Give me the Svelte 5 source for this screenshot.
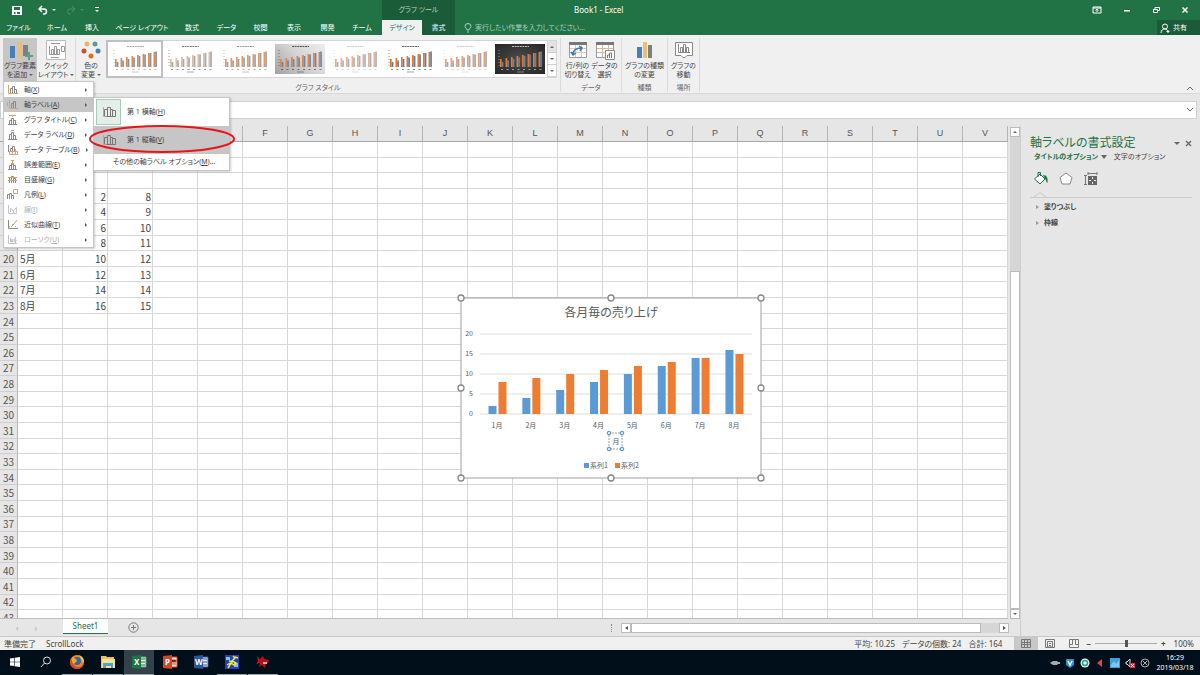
<script>
    const tabs = ["ファイル", "ホーム", "挿入", "ページ レイアウト", "数式", "データ", "校閲", "表示", "開発", "チーム"];

    const series1 = [2, 4, 6, 8, 10, 12, 14, 16];
    const series2 = [8, 9, 10, 11, 12, 13, 14, 15];
    const columns = "ABCDEFGHIJKLMNOPQRSTUV".split("");
    const firstDataRow = 16;

    const rows = Array.from({ length: 31 }, (_, i) => {
        const n = i + 13;
        const m = n - firstDataRow;
        const hasData = m >= 0 && m < series1.length;
        return { n, cells: hasData ? [`${m + 1}月`, series1[m], series2[m]] : [] };
    });

    const styles = [
        { a: "#e58a4a", b: "#8193a8", text: "#aaa", selected: true },
        { a: "#e0bda5", b: "#aaa", text: "#777" },
        { a: "#e79a62", b: "#9aa3ae", text: "#999" },
        { fill: "gray", a: "#d9874f", b: "#71879f", text: "#555" },
        { a: "#eeb08a", b: "#a3b4c8", text: "#ccc" },
        { a: "#e8772e", b: "#5e7fa3", text: "#666" },
        { a: "#e9a273", b: "#a2aab5", text: "#ccc" },
        { fill: "dark", a: "#e8772e", b: "#6e8299", text: "#bbb" },
    ];

    // g = gray strokes, o = orange strokes
    const menu = [
        { label: "軸", key: "X", g: "M3.5 9V4.500h2V9M5.500 9V2.500h2V9M7.500 9V5.500h2V9", o: "M1.500 1v8.500H11" },
        { label: "軸ラベル", key: "A", g: "M4.500 9V4.500h2V9M6.500 9V2.500h2V9", o: "M.5 3v4M2.500 1v8.500H11", open: true },
        { label: "グラフ タイトル", key: "C", g: "M2.500 10V6.500h2V10M4.500 10V4.500h2V10M6.500 10V6.500h2V10M1 10.500h9", o: "M2 1.500h7M5.500 1v2" },
        { label: "データ ラベル", key: "D", g: "M2.500 10V5.500h2V10M4.500 10V3.500h2V10M6.500 10V6.500h2V10M1 10.500h9", o: "M4 1.500h3" },
        { label: "データ テーブル", key: "B", g: "M1.500 1v7M3.500 7V4.500h2V7M5.500 7V2.500h2V7", o: "M2.500 7.500h8v3h-8zM5.500 8v2M8.500 5v5" },
        { label: "誤差範囲", key: "E", g: "M2.500 10V6.500h2V10M4.500 10V4.500h2V10M6.500 10V6.500h2V10M1 10.500h9", o: "M4 1.500h3M5.500 2v4" },
        { label: "目盛線", key: "G", g: "M2.500 9V3.500h2V9M4.500 9V2.500h2V9M6.500 9V4.500h2V9", o: "M1 3.500h9M1 6.500h9" },
        { label: "凡例", key: "L", g: "M.5 10V5.500h2V10M2.500 10V4.500h2V10M4.500 10V6.500h2V10", o: "M6.500.5h4v4h-4z" },
        { label: "線", key: "I", g: "M1.500 1v8.500H10M3.500 8V4.500l3 2 3-3v5M6.500 6v3", o: "", off: true },
        { label: "近似曲線", key: "T", g: "M1.500 1v8.500H11", o: "M2 7.500h1M4 8l3-3 3-4M5 5.500h1M8 7.500h1" },
        { label: "ローソク", key: "U", g: "M1.500 1v8.500H10M3.500 4v4M4.500 5.500h1V8h-1zM8.500 3v6M7 5.500h2v2H7z", o: "", off: true },
    ];

    const handles = [[0, 0], [150, 0], [300, 0], [0, 90], [300, 90], [0, 180], [150, 180], [300, 180]];
</script>

{#snippet axisIcon()}
    <svg class="axisIcon" viewBox="0 0 16 16" fill="none">
        <path d="M2.500 3v9.500H6" stroke="#d8a070" />
        <path d="M3.500 12V5.500h3V12M6.500 12V3.500h3V12M9.500 12V5.500h2V12M11.500 6.500h3V12.500h-9" stroke="#777" />
    </svg>
{/snippet}

<main>
    <header>
        <div class="titlebar">
            <div class="quick">
                <button aria-label="保存"><svg width="10" height="10" viewBox="0 0 10 10"><path d="M0 1h10v9H0zM2 2v3h6V2zM2 7v2h1.500V7zM5 7v2h3V7z" fill="#fff" fill-rule="evenodd" /></svg></button>
                <button aria-label="元に戻す"><svg width="18" height="10" viewBox="0 0 18 10" fill="none" stroke="#fff"><path d="M4 1L1 4l3 3M1 4h5a2.500 2.500 0 0 1 0 5H5" stroke-width="1.500" /><path d="M14 4h4l-2 2z" fill="#fff" stroke="none" /></svg></button>
                <button aria-label="やり直し"><svg width="18" height="10" viewBox="0 0 18 10" fill="none" stroke="#4c8f6b"><path d="M6 1l3 3-3 3M9 4H4a2.500 2.500 0 0 0 0 5h1" /><path d="M14 4h4l-2 2z" fill="#4c8f6b" stroke="none" /></svg></button>
                <button aria-label="カスタマイズ"><svg width="6" height="10" viewBox="0 0 6 10" fill="#fff"><path d="M1 2h4v1H1zM1 5h4L3 7z" /></svg></button>
            </div>
            <div class="context">グラフ ツール</div>
            <h1>Book1 - Excel</h1>
            <div class="window">
                <button aria-label="リボンの表示オプション"><svg width="10" height="8" viewBox="0 0 10 8" fill="none" stroke="#fff"><path d="M1 1h8v6H1zM1 2h8M5 6V3M3.500 4.500L5 3l1.500 1.500" /></svg></button>
                <button aria-label="最小化"><svg width="8" height="8" viewBox="0 0 8 8"><path d="M1 4h6v1.500H1z" fill="#fff" /></svg></button>
                <button aria-label="元のサイズに戻す"><svg width="8" height="8" viewBox="0 0 8 8" fill="none" stroke="#fff"><path d="M1.500 3.500h4v3h-4zM3 3V1.500h4.500v3H6" /></svg></button>
                <button aria-label="閉じる"><svg width="8" height="8" viewBox="0 0 8 8" stroke="#fff" stroke-width="1.500"><path d="M1.500 1.500l5 5M6.500 1.500l-5 5" /></svg></button>
            </div>
        </div>
        <nav>
            <div class="tabs">
                {#each tabs as tab}
                    <button>{tab}</button>
                {/each}
            </div>
            <div class="contextTabs">
                <button class="active">デザイン</button>
                <button>書式</button>
            </div>
            <label class="tell">
                <svg width="8" height="10" viewBox="0 0 8 10" fill="none" stroke="#b5d2c2"><path d="M3 7C3 5 1 5 1 3.500a3 3 0 0 1 6 0C7 5 5 5 5 7zM3 9h2" /></svg>
                <input placeholder="実行したい作業を入力してください..." aria-label="操作アシスト" />
            </label>
            <button class="share">
                <svg width="10" height="10" viewBox="0 0 10 10" fill="none" stroke="#fff"><circle cx="5" cy="3.500" r="2.500" /><path d="M1 10c0-3 2-4 4-4s2 1 3 2M8 7v3M6.500 8.500h3" /></svg>
                共有
            </button>
        </nav>
    </header>

    <section class="ribbon">
        <div class="addWrap">
            <button class="tool pressed">
                <svg width="28" height="20" viewBox="0 0 28 20"><path d="M4 6h5v12H4z" fill="#4a7ebb" /><path d="M11 2h5v16h-5z" fill="#e9bf76" /><path d="M17 5h5v11h-5z" fill="#7f7f7f" /><path d="M22 12h2v3h3v2h-3v3h-2v-3h-3v-2h3z" fill="#5f9f83" /></svg>
                <span>グラフ要素</span>
                <span>を追加 <i></i></span>
            </button>
            <ul class="menu">
                {#each menu as item}
                    <li class:open={item.open}>
                        <button disabled={item.off}>
                            <svg width="11" height="11" viewBox="0 0 11 11" fill="none">
                                <path d={item.g} stroke={item.off ? "#c4c4c4" : "#888"} />
                                <path d={item.o} stroke="#d9a070" />
                            </svg>
                            <span>{item.label}(<u>{item.key}</u>)</span>
                            <b></b>
                        </button>
                        {#if item.open}
                            <ul class="submenu">
                                <li><button><span class="frame">{@render axisIcon()}</span>第 1 横軸(<u>H</u>)</button></li>
                                <li class="hover"><button><span class="plain">{@render axisIcon()}</span>第 1 縦軸(<u>V</u>)</button></li>
                                <li class="more"><button>その他の軸ラベル オプション(<u>M</u>)...</button></li>
                            </ul>
                            <svg class="mark" viewBox="0 0 148 30" fill="none"><ellipse cx="74" cy="15" rx="72" ry="13" stroke="#e8141c" stroke-width="2" /></svg>
                        {/if}
                    </li>
                {/each}
            </ul>
        </div>
        <button class="tool quickLayout">
            <svg width="20" height="20" viewBox="0 0 20 20" fill="none" stroke="#999"><path d="M.5.5h19v19H.5z" fill="#fff" stroke="#bbb" /><path d="M5 3.500h9M3.500 6v8.500H14M5.500 14V9.500h2V14M8.500 14V6.500h2V14M11.500 14V9.500h2V14M15.500 6.500h3v5h-3zM5 17.500h8" /></svg>
            <span>クイック</span>
            <span>レイアウト <i></i></span>
        </button>
        <div class="group styleGroup">
            <div class="tools">
                <button class="tool">
                    <svg width="20" height="20" viewBox="0 0 20 20"><circle cx="6" cy="4" r="2.500" fill="#e8b56c" /><circle cx="14" cy="4" r="2.500" fill="#5b9aa0" /><circle cx="3" cy="11" r="2.500" fill="#c8502f" /><circle cx="17" cy="11" r="2.500" fill="#4a7ebb" /><circle cx="10" cy="16" r="2.500" fill="#de6c26" /></svg>
                    <span>色の</span>
                    <span>変更 <i></i></span>
                </button>
                <div class="gallery">
                    {#each styles as s, k}
                        <button class:selected={s.selected} aria-label="スタイル {k + 1}">
                            <svg class={s.fill} width="50" height="30" viewBox="0 0 50 30">
                                <path d="M17 2.500h17" stroke={s.text} stroke-dasharray="2 0.600" />
                                <path d="M4 6v16" stroke={s.text} stroke-width="0.700" stroke-dasharray="1 2" />
                                <path d="M6 25.500h41" stroke={s.text} stroke-width="0.800" stroke-dasharray="2 3.500" />
                                <path d="M22 28h7" stroke={s.text} stroke-width="0.600" />
                                {#each series2 as v, i}
                                    <rect x={5 + i * 5.5} y={23 - v} width="1.700" height={v} fill={s.a} />
                                    <rect x={6.7 + i * 5.5} y={23 - (v + series1[i]) / 2} width="1.700" height={(v + series1[i]) / 2} fill={s.b} />
                                {/each}
                            </svg>
                        </button>
                    {/each}
                    <div class="scroll">
                        <button class="off" aria-label="上へ"><i class="up"></i></button>
                        <button aria-label="下へ"><i></i></button>
                        <button aria-label="その他"><i class="bar"></i></button>
                    </div>
                </div>
            </div>
            <h2>グラフ スタイル</h2>
        </div>
        <div class="group dataGroup">
            <div class="tools">
                <button class="tool">
                    <svg width="20" height="20" viewBox="0 0 20 20" fill="none"><path d="M1.500 2.500h17v15h-17z" fill="#fff" stroke="#999" /><path d="M2 8.500h16M2 12.500h16M7.500 4v13M13.500 4v13" stroke="#e3c7b0" /><path d="M1 2h18v3H1z" fill="#777" /><path d="M5 15c0-5 3-7 8-7M3 12l2 3 3-2M11 6l3 2-2 3" stroke="#3c78b4" stroke-width="1.500" /></svg>
                    <span>行/列の</span>
                    <span>切り替え</span>
                </button>
                <button class="tool">
                    <svg width="20" height="20" viewBox="0 0 20 20" fill="none"><path d="M1.500 2.500h17v15h-17z" fill="#fff" stroke="#999" /><path d="M2 8.500h16M2 12.500h16M7.500 4v13M13.500 4v13" stroke="#d9b79c" /><path d="M1 2h18v3H1z" fill="#777" /><path d="M10.500 10.500h9v9h-9z" fill="#fff" stroke="#888" /><path d="M12.500 18v-3h2v3M14.500 18v-5h2v5" stroke="#777" /></svg>
                    <span>データの</span>
                    <span>選択</span>
                </button>
            </div>
            <h2>データ</h2>
        </div>
        <div class="group typeGroup">
            <div class="tools">
                <button class="tool">
                    <svg width="20" height="20" viewBox="0 0 20 20"><path d="M2 7h5v11H2z" fill="#4a7ebb" /><path d="M8 2h4v16H8z" fill="#e9c077" /><path d="M13 5h4v13h-4z" fill="#7f7f7f" /></svg>
                    <span>グラフの種類</span>
                    <span>の変更</span>
                </button>
            </div>
            <h2>種類</h2>
        </div>
        <div class="group placeGroup">
            <div class="tools">
                <button class="tool">
                    <svg width="20" height="20" viewBox="0 0 20 20" fill="none" stroke="#888"><path d="M1.500 2.500h17v13H13l-2 2H9l-2-2H1.500z" fill="#fff" /><path d="M4.500 4v8.500H16M6.500 12V7.500h2V12M9.500 12V4.500h2V12M12.500 12V7.500h2V12" /></svg>
                    <span>グラフの</span>
                    <span>移動</span>
                </button>
            </div>
            <h2>場所</h2>
        </div>
        <button class="collapse" aria-label="リボンを折りたたむ"><svg width="8" height="6" viewBox="0 0 8 6" fill="none" stroke="#666"><path d="M1 5l3-3 3 3" /></svg></button>
    </section>

    <div class="formula">
        <input aria-label="数式バー" />
        <svg width="8" height="6" viewBox="0 0 8 6" fill="none" stroke="#666"><path d="M1 1l3 3 3-3" /></svg>
    </div>

    <div class="work">
        <div class="book">
            <div class="view">
                <div class="sheet">
                    <table>
                        <colgroup>
                            <col class="rowHead" />
                            {#each columns as c}<col />{/each}
                        </colgroup>
                        <thead>
                            <tr><th></th>{#each columns as c}<th>{c}</th>{/each}</tr>
                        </thead>
                        <tbody>
                            {#each rows as row}
                                <tr>
                                    <th>{row.n}</th>
                                    {#each columns as c, i}
                                        <td class:num={i > 0}>{row.cells[i] ?? ""}</td>
                                    {/each}
                                </tr>
                            {/each}
                        </tbody>
                    </table>
                    <svg class="chart" viewBox="-4 -4 308 188" role="img" aria-label="各月毎の売り上げ">
                        <rect width="300" height="180" fill="#fff" stroke="#a0a0a0" />
                        <text x="150" y="19" class="chartTitle">各月毎の売り上げ</text>
                        {#each [0, 5, 10, 15, 20] as v}
                            <path d="M19 {116 - v * 4}h272" stroke="#dedede" />
                            <text x="12" y={118 - v * 4} class="tick">{v}</text>
                        {/each}
                        {#each series1 as v, i}
                            <rect x={27.5 + i * 33.85} y={116 - v * 4} width="8" height={v * 4} fill="#5b9bd5" />
                            <rect x={37.5 + i * 33.85} y={116 - series2[i] * 4} width="8" height={series2[i] * 4} fill="#ed7d31" />
                            <text x={36 + i * 33.85} y="130" class="month">{i + 1}月</text>
                        {/each}
                        <rect x="148" y="135" width="13" height="16" fill="none" stroke="#888" stroke-dasharray="2 1" stroke-width="0.800" />
                        <text x="155" y="146" class="month">月</text>
                        {#each [[148, 135], [161, 135], [148, 151], [161, 151]] as [x, y]}
                            <circle cx={x} cy={y} r="1.800" fill="#d5e7f5" stroke="#4a8fc7" />
                        {/each}
                        <rect x="123" y="165" width="5" height="5" fill="#5b9bd5" />
                        <text x="129" y="170" class="legend">系列1</text>
                        <rect x="154" y="165" width="5" height="5" fill="#ed7d31" />
                        <text x="160" y="170" class="legend">系列2</text>
                        {#each handles as [x, y]}
                            <circle cx={x} cy={y} r="3" fill="#fff" stroke="#888" stroke-width="1.300" />
                        {/each}
                    </svg>
                </div>
                <div class="vbar">
                    <button aria-label="上へスクロール"><i class="up"></i></button>
                    <div class="trough"></div>
                    <div class="thumb"></div>
                    <button aria-label="下へスクロール"><i></i></button>
                </div>
            </div>
            <div class="sheetTabs">
                <div class="arrows"><span>‹</span><span>›</span></div>
                <button class="sheetTab">Sheet1</button>
                <button class="add" aria-label="新しいシート"><svg width="11" height="11" viewBox="0 0 11 11" fill="none" stroke="#777"><circle cx="5.500" cy="5.500" r="4.700" /><path d="M5.500 3v5M3 5.500h5" /></svg></button>
                <span class="grip"></span>
                <div class="hbar">
                    <button aria-label="左へスクロール"><i class="left"></i></button>
                    <div class="thumb"></div>
                    <div class="trough"></div>
                    <button aria-label="右へスクロール"><i class="right"></i></button>
                </div>
            </div>
        </div>

        <aside>
            <div class="paneHead">
                <h2>軸ラベルの書式設定</h2>
                <i></i>
                <button aria-label="閉じる"><svg width="7" height="7" viewBox="0 0 7 7" stroke="#666" stroke-width="1.300"><path d="M1 1l5 5M6 1L1 6" /></svg></button>
            </div>
            <div class="options">
                <button class="current">タイトルのオプション <i></i></button>
                <button>文字のオプション</button>
            </div>
            <div class="paneIcons">
                <button aria-label="塗りつぶしと線"><svg width="16" height="16" viewBox="0 0 16 16" fill="none"><path d="M1.500 8L7 3l5 5-5 5z" fill="#fff" stroke="#217346" /><path d="M5 6V1.500h2.500V5" stroke="#217346" /><path d="M10 4c4 0 5 3 4.500 8-2-1-1-4-2.500-4z" fill="#217346" /></svg></button>
                <button aria-label="効果"><svg width="16" height="16" viewBox="0 0 16 16"><path d="M8 2l6 4.500L12 13H4L2 6.500z" fill="#fff" stroke="#888" /></svg></button>
                <button aria-label="サイズとプロパティ"><svg width="16" height="16" viewBox="0 0 16 16" fill="none" stroke="#777"><path d="M2.500 5v8M1 4.500h3M1 13.500h3M5 2.500h9M5 1v3M14 1v3" /><path d="M5 5h9v9H5z" fill="#666" stroke="none" /><path d="M9.500 6v2M9.500 11v2M6 9.500h2M11 9.500h2" stroke="#eee" /></svg></button>
            </div>
            <div class="notch"><svg width="12" height="5" viewBox="0 0 12 5" fill="#e6e6e6" stroke="#ccc"><path d="M0 4.500h1l5-4 5 4h1" /></svg></div>
            <button class="section"><b></b>塗りつぶし</button>
            <button class="section"><b></b>枠線</button>
        </aside>
    </div>

    <footer>
        <span>準備完了</span>
        <span class="lock">ScrollLock</span>
        <div class="stats">
            <span>平均: 10.25</span>
            <span>データの個数: 24</span>
            <span>合計: 164</span>
        </div>
        <button class="on" aria-label="標準"><svg width="10" height="9" viewBox="0 0 10 9" fill="none" stroke="#777"><path d="M.5.5h9v8h-9zM1 3.500h8M1 5.500h8M3.500 1v7M6.500 1v7" /></svg></button>
        <button aria-label="ページ レイアウト"><svg width="10" height="9" viewBox="0 0 10 9" fill="none" stroke="#777"><path d="M.5.5h9v8h-9zM2.500 2.500h5V8h-5zM4 4.500h2M4 6.500h2" /></svg></button>
        <button aria-label="改ページ プレビュー"><svg width="10" height="9" viewBox="0 0 10 9" fill="none" stroke="#777"><path d="M.5.5h9v8h-9zM3.500 1v4.500H1M6.500 1v4.500H9" /></svg></button>
        <div class="zoom">
            <button aria-label="縮小">−</button>
            <input type="range" min="10" max="190" value="100" aria-label="ズーム" />
            <button aria-label="拡大">+</button>
            <span>100%</span>
        </div>
    </footer>

    <div class="taskbar">
        <button aria-label="スタート"><svg width="12" height="12" viewBox="0 0 12 12" fill="#fff"><path d="M1 2.500l4-.6v3.800H1zM5.600 1.800L11 1v4.700H5.600zM1 6.300h4v3.800l-4-.6zM5.600 6.300H11V11l-5.400-.8z" /></svg></button>
        <button aria-label="検索"><svg width="12" height="12" viewBox="0 0 12 12" fill="none" stroke="#ddd"><circle cx="7" cy="4.500" r="3.500" /><path d="M4.500 7L1 11" /></svg></button>
        <button class="running" aria-label="Firefox"><svg width="16" height="16" viewBox="0 0 16 16"><circle cx="8" cy="8" r="7" fill="#f08a1d" /><path d="M2 4c-2 5 0 11 6 11 4 0 7-3 7-7-1 3-3 5-6 5-4 0-6-4-7-9z" fill="#e0432c" /><circle cx="8" cy="7" r="4" fill="#2f63b5" /><path d="M3 3l4 2 1 2-3 3-2-2z" fill="#f5a623" /><path d="M10 1c4 2 5 4 5 8l-2-3z" fill="#ffd23c" /></svg></button>
        <button class="running" aria-label="エクスプローラー"><svg width="16" height="16" viewBox="0 0 16 16"><path d="M1 2h5l1 1h7v11H1z" fill="#e8c15c" /><path d="M2 5h13v9H2z" fill="#fbe28f" /><path d="M3 9h10v5H11v-2H6v2H3z" fill="#4aa3d8" /></svg></button>
        <button class="running current" aria-label="Excel"><svg width="16" height="16" viewBox="0 0 16 16"><path d="M8 3h7v10H8z" fill="#e4efe8" stroke="#4e9a6e" /><path d="M10 5h4M10 8h4M10 11h4" stroke="#217346" /><path d="M1 2l9-1v14l-9-1z" fill="#1d7545" /><text x="3" y="11" class="app">X</text></svg></button>
        <button aria-label="PowerPoint"><svg width="16" height="16" viewBox="0 0 16 16"><path d="M8 3h7v10H8z" fill="#fbe3dc" stroke="#d24726" /><path d="M10 6h4v2h-4M10 10h4" stroke="#d24726" /><path d="M1 2l9-1v14l-9-1z" fill="#d24726" /><text x="3" y="11" class="app">P</text></svg></button>
        <button aria-label="Word"><svg width="16" height="16" viewBox="0 0 16 16"><path d="M8 3h7v10H8z" fill="#e6edf8" stroke="#2b579a" /><path d="M10 5h4M10 8h4M10 11h4" stroke="#2b579a" /><path d="M1 2l9-1v14l-9-1z" fill="#2b579a" /><text x="2" y="11" class="app">W</text></svg></button>
        <button class="running" aria-label="ツール"><svg width="14" height="14" viewBox="0 0 14 14"><path d="M0 0h14v14H0z" fill="#2340b8" /><path d="M1 2h4v3H1zM9 8h4v4H9z" fill="#7fc6e8" /><path d="M8 1l2 2-3 3 4 2-2 2-3-2-3 5M4 6l4 1M2 10l3-2M10 2l3 1" fill="none" stroke="#f3e83a" stroke-width="1.500" /></svg></button>
        <button class="running" aria-label="ビューアー"><svg width="16" height="14" viewBox="0 0 16 14"><path d="M2 1l3 3 3-3 1 3 5 1-1 3-2 1-1 4-3-3-3 2 1-4-4 1 2-3z" fill="#b3121d" /><path d="M8 8h4" stroke="#f0d0d0" stroke-width="1.500" /></svg></button>
        <div class="tray">
            <svg width="10" height="10" viewBox="0 0 10 10"><path d="M0 5l3-2h4l1 1h2v2H8L7 7H3z" fill="#a9a9a9" /></svg>
            <svg width="10" height="10" viewBox="0 0 10 10"><path d="M1 1h8v6L5 10 1 7z" fill="#2b8fd6" /><path d="M3 3l2 4 2-4" fill="none" stroke="#fff" stroke-width="1.500" /></svg>
            <svg width="10" height="10" viewBox="0 0 10 10"><circle cx="5" cy="5" r="4.500" fill="#e6f7f4" /><circle cx="5" cy="5" r="2.500" fill="none" stroke="#1fa58d" stroke-width="1.500" /></svg>
            <svg width="10" height="10" viewBox="0 0 10 10"><path d="M2 5l5-4v8z" fill="#e0443a" /></svg>
            <svg width="10" height="10" viewBox="0 0 10 10"><path d="M0 0h10v10H0z" fill="#3e9fdd" /><path d="M1 7l3-4 2 3 3-4v7H1z" fill="#7cc9ef" /></svg>
            <svg width="10" height="10" viewBox="0 0 10 10"><path d="M1 4h1l3-3v8L2 6H1z" fill="none" stroke="#ddd" /><path d="M5 5h5v5H5z" fill="#dc3545" /><path d="M6 6l3 3M9 6L6 9" stroke="#fff" /></svg>
            <svg width="10" height="10" viewBox="0 0 10 10" fill="none" stroke="#aaa"><circle cx="5" cy="5" r="4" /><path d="M3 3l4 4M7 3L3 7" /></svg>
        </div>
        <div class="clock"><span>16:29</span><span>2019/03/18</span></div>
    </div>
</main>

<style>
    :global(body) {
        margin: 0;
    }

    main {
        display: flex;
        flex-direction: column;
        height: 100vh;
        overflow: hidden;
        background: #e6e6e6;
        color: #444;
        font-family: "Noto Sans", "Noto Sans CJK JP", sans-serif;
        font-size: 7px;
        line-height: 10px;
        font-feature-settings: "palt";

        * {
            box-sizing: border-box;
        }
    }

    button,
    input {
        margin: 0;
        padding: 0;
        border: 0;
        background: none;
        color: inherit;
        font: inherit;
        font-feature-settings: inherit;
        white-space: nowrap;
    }

    h1,
    h2 {
        margin: 0;
        font-size: inherit;
        font-weight: normal;
    }

    ul {
        margin: 0;
        padding: 0;
        list-style: none;
    }

    svg {
        display: block;
        flex: none;
    }

    /* small arrows */
    i {
        display: inline-block;
        border: 2px solid transparent;
        border-top-color: #666;
        border-bottom: 0;

        &.up {
            border-top: 0;
            border-bottom: 2px solid #666;
        }

        &.left {
            border: 2px solid transparent;
            border-left: 0;
            border-right: 3px solid #555;
        }

        &.right {
            border: 2px solid transparent;
            border-right: 0;
            border-left: 3px solid #555;
        }
    }

    header {
        background: #217346;
        color: #fff;
    }

    .titlebar {
        display: flex;
        align-items: center;
        height: 20px;

        .quick {
            display: flex;
            align-items: center;
            gap: 10px;
            width: 382px;
            padding-left: 12px;

            button:nth-child(2) {
                margin-left: 6px;
            }
        }

        .context {
            width: 73px;
            line-height: 20px;
            text-align: center;
            background: #1a5c38;
            color: #b9d0c3;
        }

        h1 {
            flex: 1;
            padding-left: 119px;
            font-size: 8px;
        }

        .window {
            display: flex;
            gap: 21px;
            padding-right: 11px;
        }
    }

    nav {
        display: flex;
        height: 15px;

        .tabs {
            display: grid;
            grid-template-columns: 37px 40px 30px 70px 30px 39px 29px 38px 29px 40px;
        }

        .contextTabs {
            display: grid;
            grid-template-columns: 40px 33px;
            background: #1a5c38;

            .active {
                background: #f0f0f0;
                color: #217346;
            }
        }

        .tell {
            display: flex;
            align-items: center;
            flex: 1;
            gap: 3px;
            padding-left: 9px;

            input {
                width: 200px;

                &::placeholder {
                    color: #a9cbb8;
                    opacity: 1;
                }
            }
        }

        .share {
            display: flex;
            align-items: center;
            gap: 3px;
            width: 43px;
            padding-left: 3px;
            background: #1a5c38;
        }
    }

    .ribbon {
        display: flex;
        height: 59px;
        padding: 3px 6px 0 3px;
        background: #f0f0f0;
        border-bottom: 1px solid #d8d8d8;

        h2 {
            text-align: center;
            color: #666;
        }
    }

    .tool {
        display: flex;
        flex-direction: column;
        align-items: center;
        height: 43px;
        padding-top: 2px;

        svg {
            margin-bottom: 1px;
        }

        span {
            line-height: 9px;
        }

        i {
            vertical-align: middle;
        }
    }

    .addWrap {
        position: relative;
        width: 34px;

        .pressed {
            width: 34px;
            background: #c6c6c6;
        }
    }

    .quickLayout {
        width: 38px;
    }

    .group {
        height: 54px;
        padding: 0 3px;
        border-right: 1px solid #dcdcdc;

        .tools {
            display: flex;
            height: 45px;
        }

        .tool {
            flex: 1;
        }
    }

    .styleGroup {
        width: 486px;
        padding: 0;
        border-left: 1px solid #dcdcdc;

        .tool {
            flex: none;
            width: 30px;
        }
    }

    .dataGroup {
        width: 61px;
    }

    .typeGroup {
        width: 46px;
    }

    .placeGroup {
        width: 32px;
    }

    .gallery {
        display: flex;
        height: 38px;
        margin-top: 2px;
        background: #fff;
        border: 1px solid #d5d5d5;

        > button {
            display: flex;
            align-items: center;
            justify-content: center;
            width: 55px;

            &.selected {
                outline: 2px solid #c0c0c0;
                outline-offset: -1px;
            }
        }

        .gray {
            background: linear-gradient(45deg, #a2a2a2, #d2d2d2 50%, #eee);
        }

        .dark {
            background: radial-gradient(#4c4c4c, #262626);
        }

        .scroll {
            display: grid;
            grid-template-rows: 1fr 1fr 1fr;
            width: 9px;

            button {
                display: flex;
                align-items: center;
                justify-content: center;
                border-left: 1px solid #d0d0d0;
                border-bottom: 1px solid #d0d0d0;
            }

            .off {
                background: #e3e3e3;
            }

            .bar {
                box-shadow: 0 -2px 0 -1px #888;
            }
        }
    }

    .collapse {
        align-self: flex-end;
        margin-left: auto;
        padding-bottom: 2px;
    }

    .menu {
        position: absolute;
        z-index: 2;
        top: 43px;
        left: 0;
        width: 91px;
        background: #fff;
        border: 1px solid #c6c6c6;
        box-shadow: 1px 1px 2px rgba(0, 0, 0, 0.2);

        > li > button {
            display: flex;
            align-items: center;
            gap: 6px;
            width: 100%;
            height: 15px;
            padding: 0 6px 0 3px;

            &:disabled {
                color: #b0b0b0;
            }

            b {
                margin-left: auto;
                border: 2px solid transparent;
                border-right: 0;
                border-left-color: #555;
            }
        }

        .open {
            position: relative;

            > button {
                background: #c6c6c6;
            }
        }
    }

    .submenu {
        position: absolute;
        top: 0;
        left: 89px;
        width: 137px;
        background: #fff;
        border: 1px solid #c6c6c6;
        box-shadow: 1px 1px 2px rgba(0, 0, 0, 0.2);

        button {
            display: flex;
            align-items: center;
            width: 100%;
            height: 28px;
            padding-left: 2px;
        }

        .hover {
            background: #c6c6c6;
        }

        .more button {
            height: 16px;
            padding-left: 19px;
        }

        .frame,
        .plain {
            display: grid;
            place-items: center;
            width: 25px;
            height: 26px;
            margin-right: 6px;
        }

        .frame {
            background: #e3efe8;
            border: 1px solid #a5cdb8;
        }

        .axisIcon {
            width: 16px;
            height: 16px;
        }
    }

    .mark {
        position: absolute;
        top: 27px;
        left: 84px;
        width: 148px;
        height: 30px;
    }

    .formula {
        display: flex;
        align-items: center;
        height: 18px;
        margin: 7px 3px 7px 0;
        padding-right: 2px;
        background: #fff;
        border: 1px solid #d0d0d0;

        input {
            flex: 1;
        }
    }

    .work {
        display: flex;
        flex: 1;
        min-height: 0;
    }

    .book {
        display: flex;
        flex-direction: column;
        flex: 1;
        min-width: 0;
    }

    .view {
        display: flex;
        flex: 1;
        min-height: 0;
    }

    .sheet {
        position: relative;
        flex: 1;
        min-width: 0;
        overflow: hidden;
        border-bottom: 1px solid #bdbdbd;
    }

    table {
        width: 100%;
        height: calc(100% + 8px);
        table-layout: fixed;
        border-spacing: 0;
        background: #fff;
        font-family: "Noto Sans CJK JP", sans-serif;
        font-size: 10px;
        line-height: 13px;
        color: #444;

        .rowHead {
            width: 18px;
        }

        th {
            padding: 0;
            font-weight: normal;
            background: #e6e6e6;
            border-right: 1px solid #b5b5b5;
            border-bottom: 1px solid #cfcfcf;
            color: #555;
        }

        thead th {
            height: 16px;
            font-family: "Liberation Sans", sans-serif;
            font-size: 9px;
            border-bottom-color: #a8a8a8;
        }

        td {
            padding: 0 2px;
            border-right: 1px solid #d8d8d8;
            border-bottom: 1px solid #d8d8d8;
            white-space: nowrap;
        }

        .num {
            padding: 0 1px;
            text-align: right;
        }
    }

    .chart {
        position: absolute;
        top: 168px;
        left: 457px;
        width: 308px;
        height: 188px;

        text {
            font-family: "Noto Sans CJK JP", sans-serif;
            font-size: 7px;
            fill: #595959;
        }

        .chartTitle {
            font-size: 12px;
            text-anchor: middle;
        }

        .tick {
            text-anchor: end;
        }

        .month {
            text-anchor: middle;
        }
    }

    .vbar {
        display: flex;
        flex-direction: column;
        width: 12px;
        padding: 1px 0 0 2px;

        button {
            display: grid;
            place-items: center;
            height: 10px;
            background: #fff;
            border: 1px solid #bbb;
        }

        .trough {
            flex: 135;
            background: #d6d6d6;
        }

        .thumb {
            flex: 337;
            background: #fff;
            border: 1px solid #bbb;
        }
    }

    .sheetTabs {
        display: flex;
        align-items: center;
        height: 17px;

        .arrows {
            display: flex;
            gap: 16px;
            width: 63px;
            padding-left: 16px;
            font-size: 8px;
            color: #aaa;
        }

        .sheetTab {
            align-self: flex-start;
            width: 45px;
            height: 15px;
            background: #fff;
            border-bottom: 1px solid #217346;
            font-size: 8px;
            color: #217346;
        }

        .add {
            margin-left: 20px;
        }

        .grip {
            height: 8px;
            margin-left: auto;
            margin-right: 9px;
            border-left: 1px dotted #888;
        }

        .hbar {
            display: flex;
            width: 38%;
            height: 10px;
            margin-right: 11px;

            button {
                display: grid;
                place-items: center;
                width: 10px;
                background: #fff;
                border: 1px solid #bbb;
            }

            .thumb {
                flex: 348;
                background: #fff;
                border: 1px solid #bbb;
            }

            .trough {
                flex: 18;
                background: #d6d6d6;
            }
        }
    }

    aside {
        width: 180px;
        padding: 8px 8px 0 9px;
        border-left: 1px solid #d0d0d0;

        .paneHead {
            display: flex;
            align-items: center;
            gap: 5px;

            h2 {
                flex: 1;
                font-size: 12px;
                line-height: 18px;
                color: #217346;
            }

            i {
                border-width: 3px 3px 0;
            }
        }

        .options {
            display: flex;
            gap: 7px;
            padding-left: 4px;

            .current {
                font-weight: bold;
                color: #217346;
            }

            i {
                margin-left: 1px;
                border-width: 4px 3px 0;
            }
        }

        .paneIcons {
            display: flex;
            gap: 9px;
            padding: 9px 0 5px 3px;
        }

        .notch {
            margin-bottom: 1px;
            padding-left: 4px;
            border-bottom: 1px solid #ccc;
        }

        .section {
            display: flex;
            align-items: center;
            gap: 5px;
            height: 16px;
            padding-left: 6px;
            font-weight: bold;

            b {
                border: 2px solid transparent;
                border-right: 0;
                border-left: 3px solid #999;
            }
        }
    }

    footer {
        display: flex;
        align-items: center;
        height: 14px;
        padding: 0 6px 0 4px;
        background: #f0f0f0;
        border-top: 1px solid #c8c8c8;
        font-size: 8px;

        .lock {
            margin-left: 10px;
        }

        .stats {
            display: flex;
            gap: 7px;
            margin-left: auto;
            margin-right: 12px;
        }

        > button {
            display: grid;
            place-items: center;
            width: 24px;
            height: 13px;
        }

        .on {
            background: #c8c8c8;
        }

        .zoom {
            display: flex;
            align-items: center;
            gap: 4px;

            button {
                font-weight: bold;
            }

            span {
                margin-left: 4px;
            }

            input {
                width: 62px;
                height: 10px;
                appearance: none;

                &::-webkit-slider-runnable-track {
                    height: 1px;
                    background: #aaa;
                }

                &::-webkit-slider-thumb {
                    width: 3px;
                    height: 7px;
                    margin-top: -3px;
                    background: #555;
                    appearance: none;
                }
            }
        }
    }

    .taskbar {
        display: flex;
        height: 25px;
        background: #010f1a;
        color: #fff;

        > button {
            display: grid;
            place-items: center;
            width: 30px;
            margin-right: 1px;
            border-bottom: 1px solid transparent;

            &.running {
                border-bottom-color: #9aa5ad;
            }

            &.current {
                background: #34414a;
            }
        }

        .app {
            font-family: "Noto Sans", sans-serif;
            font-size: 8px;
            font-weight: bold;
            fill: #fff;
        }

        .tray {
            display: flex;
            align-items: center;
            gap: 5px;
            margin-left: auto;
        }

        .clock {
            display: flex;
            flex-direction: column;
            justify-content: center;
            width: 50px;
            text-align: center;
        }
    }
</style>
